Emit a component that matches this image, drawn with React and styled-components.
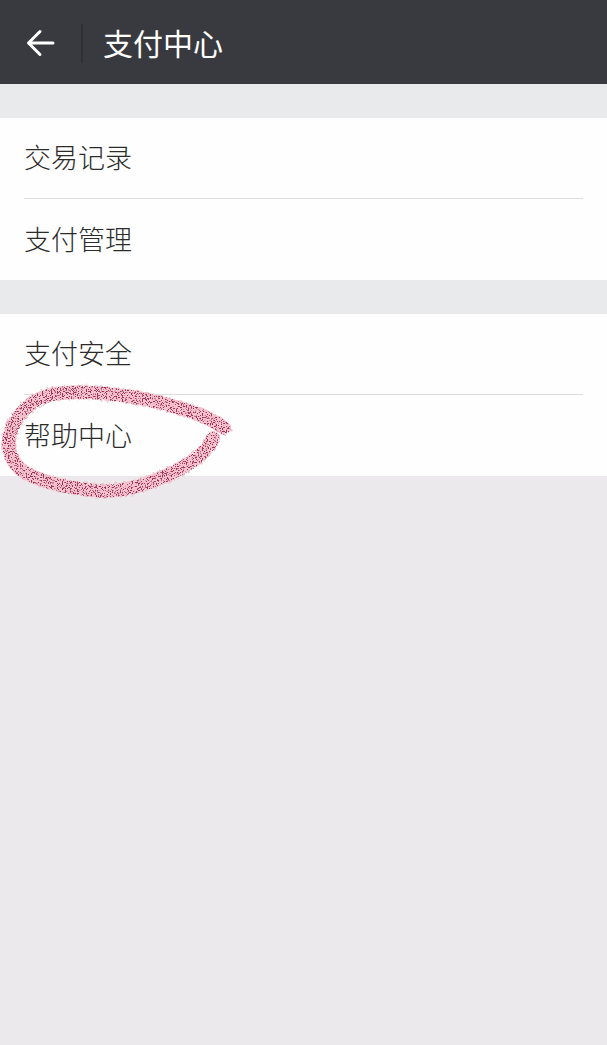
import React from "react";
import styled, { createGlobalStyle } from "styled-components";

const GlobalStyle = createGlobalStyle`
  html, body {
    margin: 0;
    padding: 0;
    background: #ebe9eb;
    font-family: "Noto Sans CJK SC", "Liberation Sans", sans-serif;
  }
`;

const Page = styled.div`
  background: #ebe9eb;
  height: 1045px;
  overflow: hidden;
  position: relative;
  width: 607px;
`;

const Header = styled.header`
  align-items: center;
  background: #393a3f;
  display: flex;
  height: 84px;
  padding-left: 25px;
`;

const BackButton = styled.div`
  display: flex;
  height: 30px;
  margin-top: 2px;
  width: 30px;
`;

const HeaderDivider = styled.div`
  background: #2f3034;
  height: 39px;
  margin: 3px 0 0 26px;
  width: 2px;
`;

const Title = styled.h1`
  color: #fff;
  font-size: 30px;
  font-weight: 400;
  line-height: 1;
  margin: 0 0 0 20px;
`;

const Groups = styled.div`
  background: #e9eaec;
  display: flow-root;
`;

const Group = styled.section`
  background: #fefefe;
  margin-top: 34px;
`;

const Row = styled.div`
  align-items: center;
  box-sizing: border-box;
  color: #2b2b2b;
  display: flex;
  font-size: 27px;
  font-weight: 300;
  height: ${({ $first }) => ($first ? "80px" : "81px")};
  padding: 0 0 3px 24px;
`;

const RowDivider = styled.div`
  background: #dcdcdc;
  height: 1px;
  margin: 0 24px;
`;

const Scribble = styled.svg`
  left: 0;
  pointer-events: none;
  position: absolute;
  top: 375px;
`;

const groups = [
  ["交易记录", "支付管理"],
  ["支付安全", "帮助中心"],
];

const circlePath =
  "M224 53 C205 38 170 29 133 22 C105 18 85 16 62 18 C38 20 21 33 12 53 C6 68 8 82 20 94 C36 106 66 113 100 116 C130 117 160 106 190 88 C202 80 209 72 213 63";

const App = () => (
  <Page>
    <GlobalStyle />
    <Header>
      <BackButton>
        <svg width="30" height="30" viewBox="0 0 30 30" fill="none">
          <path
            d="M28 15H4M15 3.5L3.5 15 15 26.5"
            stroke="#fff"
            strokeWidth="3"
            strokeLinecap="round"
            strokeLinejoin="round"
          />
        </svg>
      </BackButton>
      <HeaderDivider />
      <Title>支付中心</Title>
    </Header>
    <Groups>
      {groups.map((rows, i) => (
        <Group key={i}>
          {rows.map((label, j) => (
            <React.Fragment key={label}>
              {j > 0 && <RowDivider />}
              <Row $first={j === 0}>{label}</Row>
            </React.Fragment>
          ))}
        </Group>
      ))}
    </Groups>
    <Scribble width="240" height="130" viewBox="0 0 240 130" fill="none">
      <defs>
        <filter id="rough" x="-10%" y="-10%" width="120%" height="120%">
          <feTurbulence type="fractalNoise" baseFrequency="0.35" numOctaves="2" seed="7" result="wobble" />
          <feDisplacementMap in="SourceGraphic" in2="wobble" scale="5" />
        </filter>
        <filter id="speckle" x="-10%" y="-10%" width="120%" height="120%">
          <feTurbulence type="fractalNoise" baseFrequency="0.8" numOctaves="2" seed="4" result="noise" />
          <feColorMatrix
            in="noise"
            type="matrix"
            values="0 0 0 0 0.36  0 0 0 0 0.03  0 0 0 0 0.1  0 0 0 10 -5.3"
            result="dots"
          />
          <feComposite in="dots" in2="SourceAlpha" operator="in" />
        </filter>
      </defs>
      <path d={circlePath} stroke="#f3c3cd" strokeWidth="14" strokeLinecap="round" filter="url(#rough)" />
      <path d={circlePath} stroke="#000" strokeWidth="13" strokeLinecap="round" filter="url(#speckle)" />
    </Scribble>
  </Page>
);

export default App;
